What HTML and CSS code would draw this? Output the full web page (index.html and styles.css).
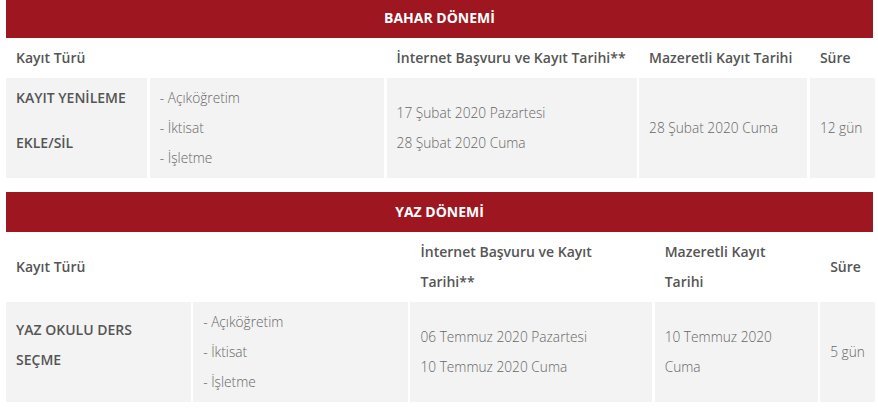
FILE: index.html
```html
<!DOCTYPE html>
<html lang="tr">
<head>
<meta charset="utf-8">
<title>Kayıt Takvimi</title>
<link rel="stylesheet" href="styles.css">
</head>
<body>
<div class="page">
  <section class="term term-spring">
    <div class="title">BAHAR DÖNEMİ</div>
    <div class="head span2">Kayıt Türü</div>
    <div class="head">İnternet Başvuru ve Kayıt Tarihi**</div>
    <div class="head">Mazeretli Kayıt Tarihi</div>
    <div class="head">Süre</div>
    <div class="cell strong"><p>KAYIT YENİLEME</p><p>EKLE/SİL</p></div>
    <div class="cell list">- Açıköğretim<br>- İktisat<br>- İşletme</div>
    <div class="cell">17 Şubat 2020 Pazartesi<br>28 Şubat 2020 Cuma</div>
    <div class="cell">28 Şubat 2020 Cuma</div>
    <div class="cell">12 gün</div>
  </section>
  <section class="term term-summer">
    <div class="title">YAZ DÖNEMİ</div>
    <div class="head span2">Kayıt Türü</div>
    <div class="head">İnternet Başvuru ve Kayıt<br>Tarihi**</div>
    <div class="head">Mazeretli Kayıt<br>Tarihi</div>
    <div class="head">Süre</div>
    <div class="cell strong"><p>YAZ OKULU DERS<br>SEÇME</p></div>
    <div class="cell list">- Açıköğretim<br>- İktisat<br>- İşletme</div>
    <div class="cell">06 Temmuz 2020 Pazartesi<br>10 Temmuz 2020 Cuma</div>
    <div class="cell">10 Temmuz 2020<br>Cuma</div>
    <div class="cell">5 gün</div>
  </section>
</div>
</body>
</html>
```
FILE: styles.css
```css
* { box-sizing: border-box; }
html, body { margin: 0; padding: 0; background: #fff; }
body {
  font-family: "Open Sans", "Noto Sans", sans-serif;
  font-size: 13.7px;
  line-height: 30px;
  color: #666;
}
.page {
  margin-top: -2px;
  padding: 0 3px 0 6px;
  display: flex;
  flex-direction: column;
  gap: 14px;
}
.term {
  display: grid;
  column-gap: 2.5px;
}
.term-spring { grid-template-columns: 141.3px 234.3px 250px 168.3px 1fr; }
.term-summer { grid-template-columns: 184.7px 214.8px 241.7px 163px 1fr; }
.title {
  grid-column: 1 / -1;
  background: #9e1620;
  color: #fff;
  font-size: 14px;
  font-weight: 700;
  text-align: center;
  padding: 5px 10px;
  margin-right: 2px;
}
.head {
  font-size: 14px;
  font-weight: 600;
  color: #555;
  padding: 5px 10px;
  display: flex;
  align-items: center;
  white-space: nowrap;
}
.span2 { grid-column: span 2; }
.cell {
  background: #f3f3f3;
  font-weight: 300;
  padding: 5px 10px;
  display: flex;
  flex-direction: column;
  justify-content: center;
  white-space: nowrap;
}
.cell.strong { font-size: 14px; font-weight: 600; color: #555; }
.cell p { margin: 0 0 15px; }
```
